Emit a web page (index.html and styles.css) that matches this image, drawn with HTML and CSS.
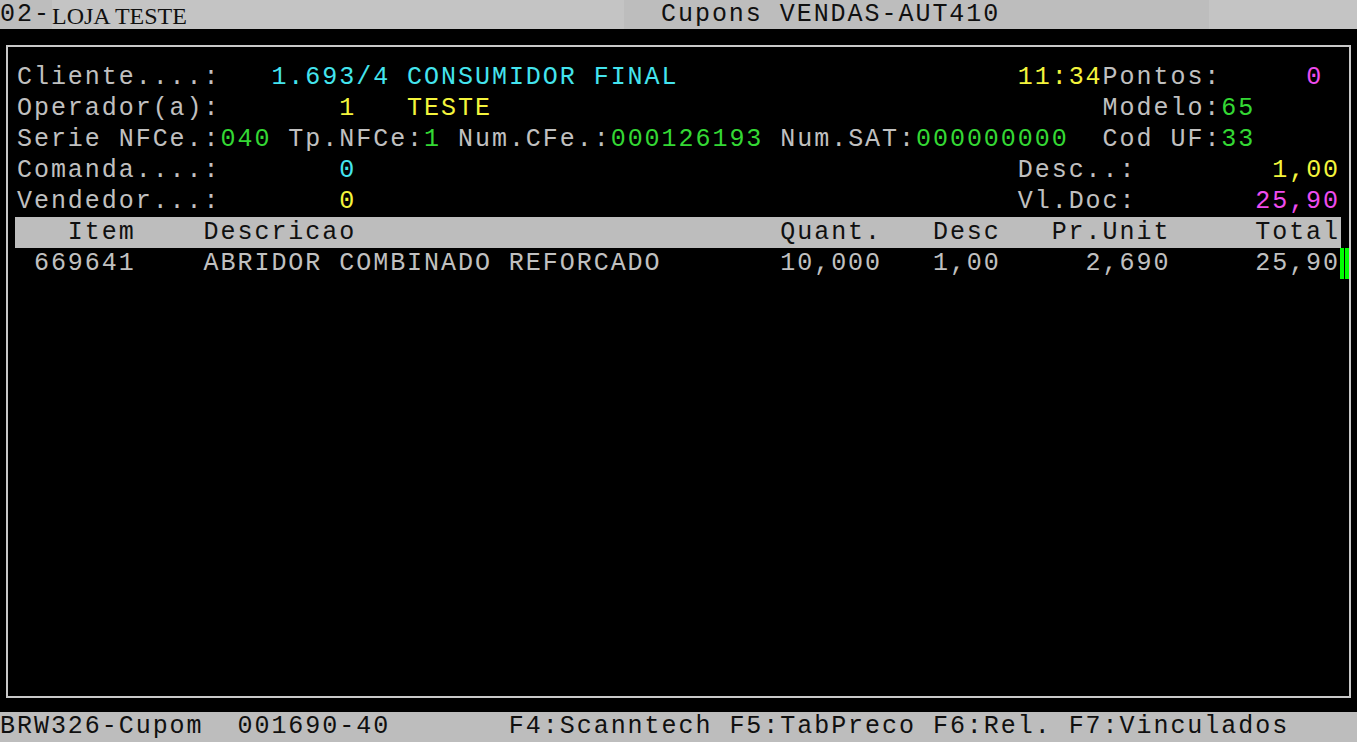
FILE: index.html
```html
<!DOCTYPE html>
<html lang="pt-BR">
<head>
  <meta charset="UTF-8" />
  <title>Cupons VENDAS-AUT410</title>
  <link rel="stylesheet" href="styles.css">
</head>
<body>
  <div class="topbar">
    <span class="tb-code">02-</span>
    <span class="tb-store">LOJA TESTE</span>
    <span class="tb-title">Cupons VENDAS-AUT410</span>
    <span class="tb-rest"></span>
  </div>

  <div class="panel">
    <div class="row">Cliente....:   <span class="cyan">1.693/4</span> <span class="cyan">CONSUMIDOR FINAL</span>                    <span class="yellow">11:34</span>Pontos:     <span class="magenta">0</span></div>
    <div class="row">Operador(a):       <span class="yellow">1</span>   <span class="yellow">TESTE</span>                                    Modelo:<span class="green">65</span></div>
    <div class="row">Serie NFCe.:<span class="green">040</span> Tp.NFCe:<span class="green">1</span> Num.CFe.:<span class="green">000126193</span> Num.SAT:<span class="green">000000000</span>  Cod UF:<span class="green">33</span></div>
    <div class="row">Comanda....:       <span class="cyan">0</span>                                       Desc..:        <span class="yellow">1,00</span></div>
    <div class="row">Vendedor...:       <span class="yellow">0</span>                                       Vl.Doc:       <span class="magenta">25,90</span></div>
    <div class="row head">   Item    Descricao                         Quant.   Desc   Pr.Unit     Total</div>
    <div class="row"> 669641    ABRIDOR COMBINADO REFORCADO       10,000   1,00     2,690     25,90<span class="cursor"></span></div>
  </div>

  <div class="bottombar">BRW326-Cupom  001690-40       F4:Scanntech F5:TabPreco F6:Rel. F7:Vinculados</div>
</body>
</html>
```

FILE: styles.css
```css
body {
  margin: 0;
  padding: 0;
  width: 1357px;
  height: 742px;
  overflow: hidden;
  background: #000;
  color: #c0c0c0;
  font-family: "Liberation Mono", "Courier New", monospace;
  font-size: 25px;
  letter-spacing: 1.96px;
}
.topbar {
  display: flex;
  height: 29px;
  line-height: 29px;
  color: #101010;
  white-space: pre;
}
.tb-code {
  width: 52px;
  background: #bdbdbd;
}
.tb-store {
  width: 572px;
  background: #c4c4c4;
  font-family: "Liberation Serif", "Times New Roman", serif;
  font-size: 24px;
  letter-spacing: 0;
  line-height: 33px;
}
.tb-title {
  width: 585px;
  padding-left: 37px;
  box-sizing: border-box;
  background: #bdbdbd;
}
.tb-rest {
  flex: 1;
  background: #c4c4c4;
}
.panel {
  box-sizing: border-box;
  height: 653px;
  margin: 16px 6px 0;
  padding: 14.8px 0 0 8.96px;
  border: 2px solid #c8c8c8;
}
.row {
  height: 31px;
  line-height: 31px;
  white-space: pre;
}
.row.head {
  box-sizing: border-box;
  width: 1326px;
  margin-left: -2px;
  padding-left: 2px;
  background: #bdbdbd;
  color: #101010;
}
.cyan { color: #44e4ee; }
.yellow { color: #f4f43c; }
.green { color: #34d834; }
.magenta { color: #ee4cee; }
.cursor {
  display: inline-block;
  vertical-align: top;
  width: 9px;
  height: 31px;
  background: linear-gradient(to right, #00ff00 0 4px, #000 4px 5px, #00ff00 5px 9px);
}
.bottombar {
  margin-top: 14px;
  height: 30px;
  line-height: 30px;
  background: #bdbdbd;
  color: #101010;
  white-space: pre;
}
```
